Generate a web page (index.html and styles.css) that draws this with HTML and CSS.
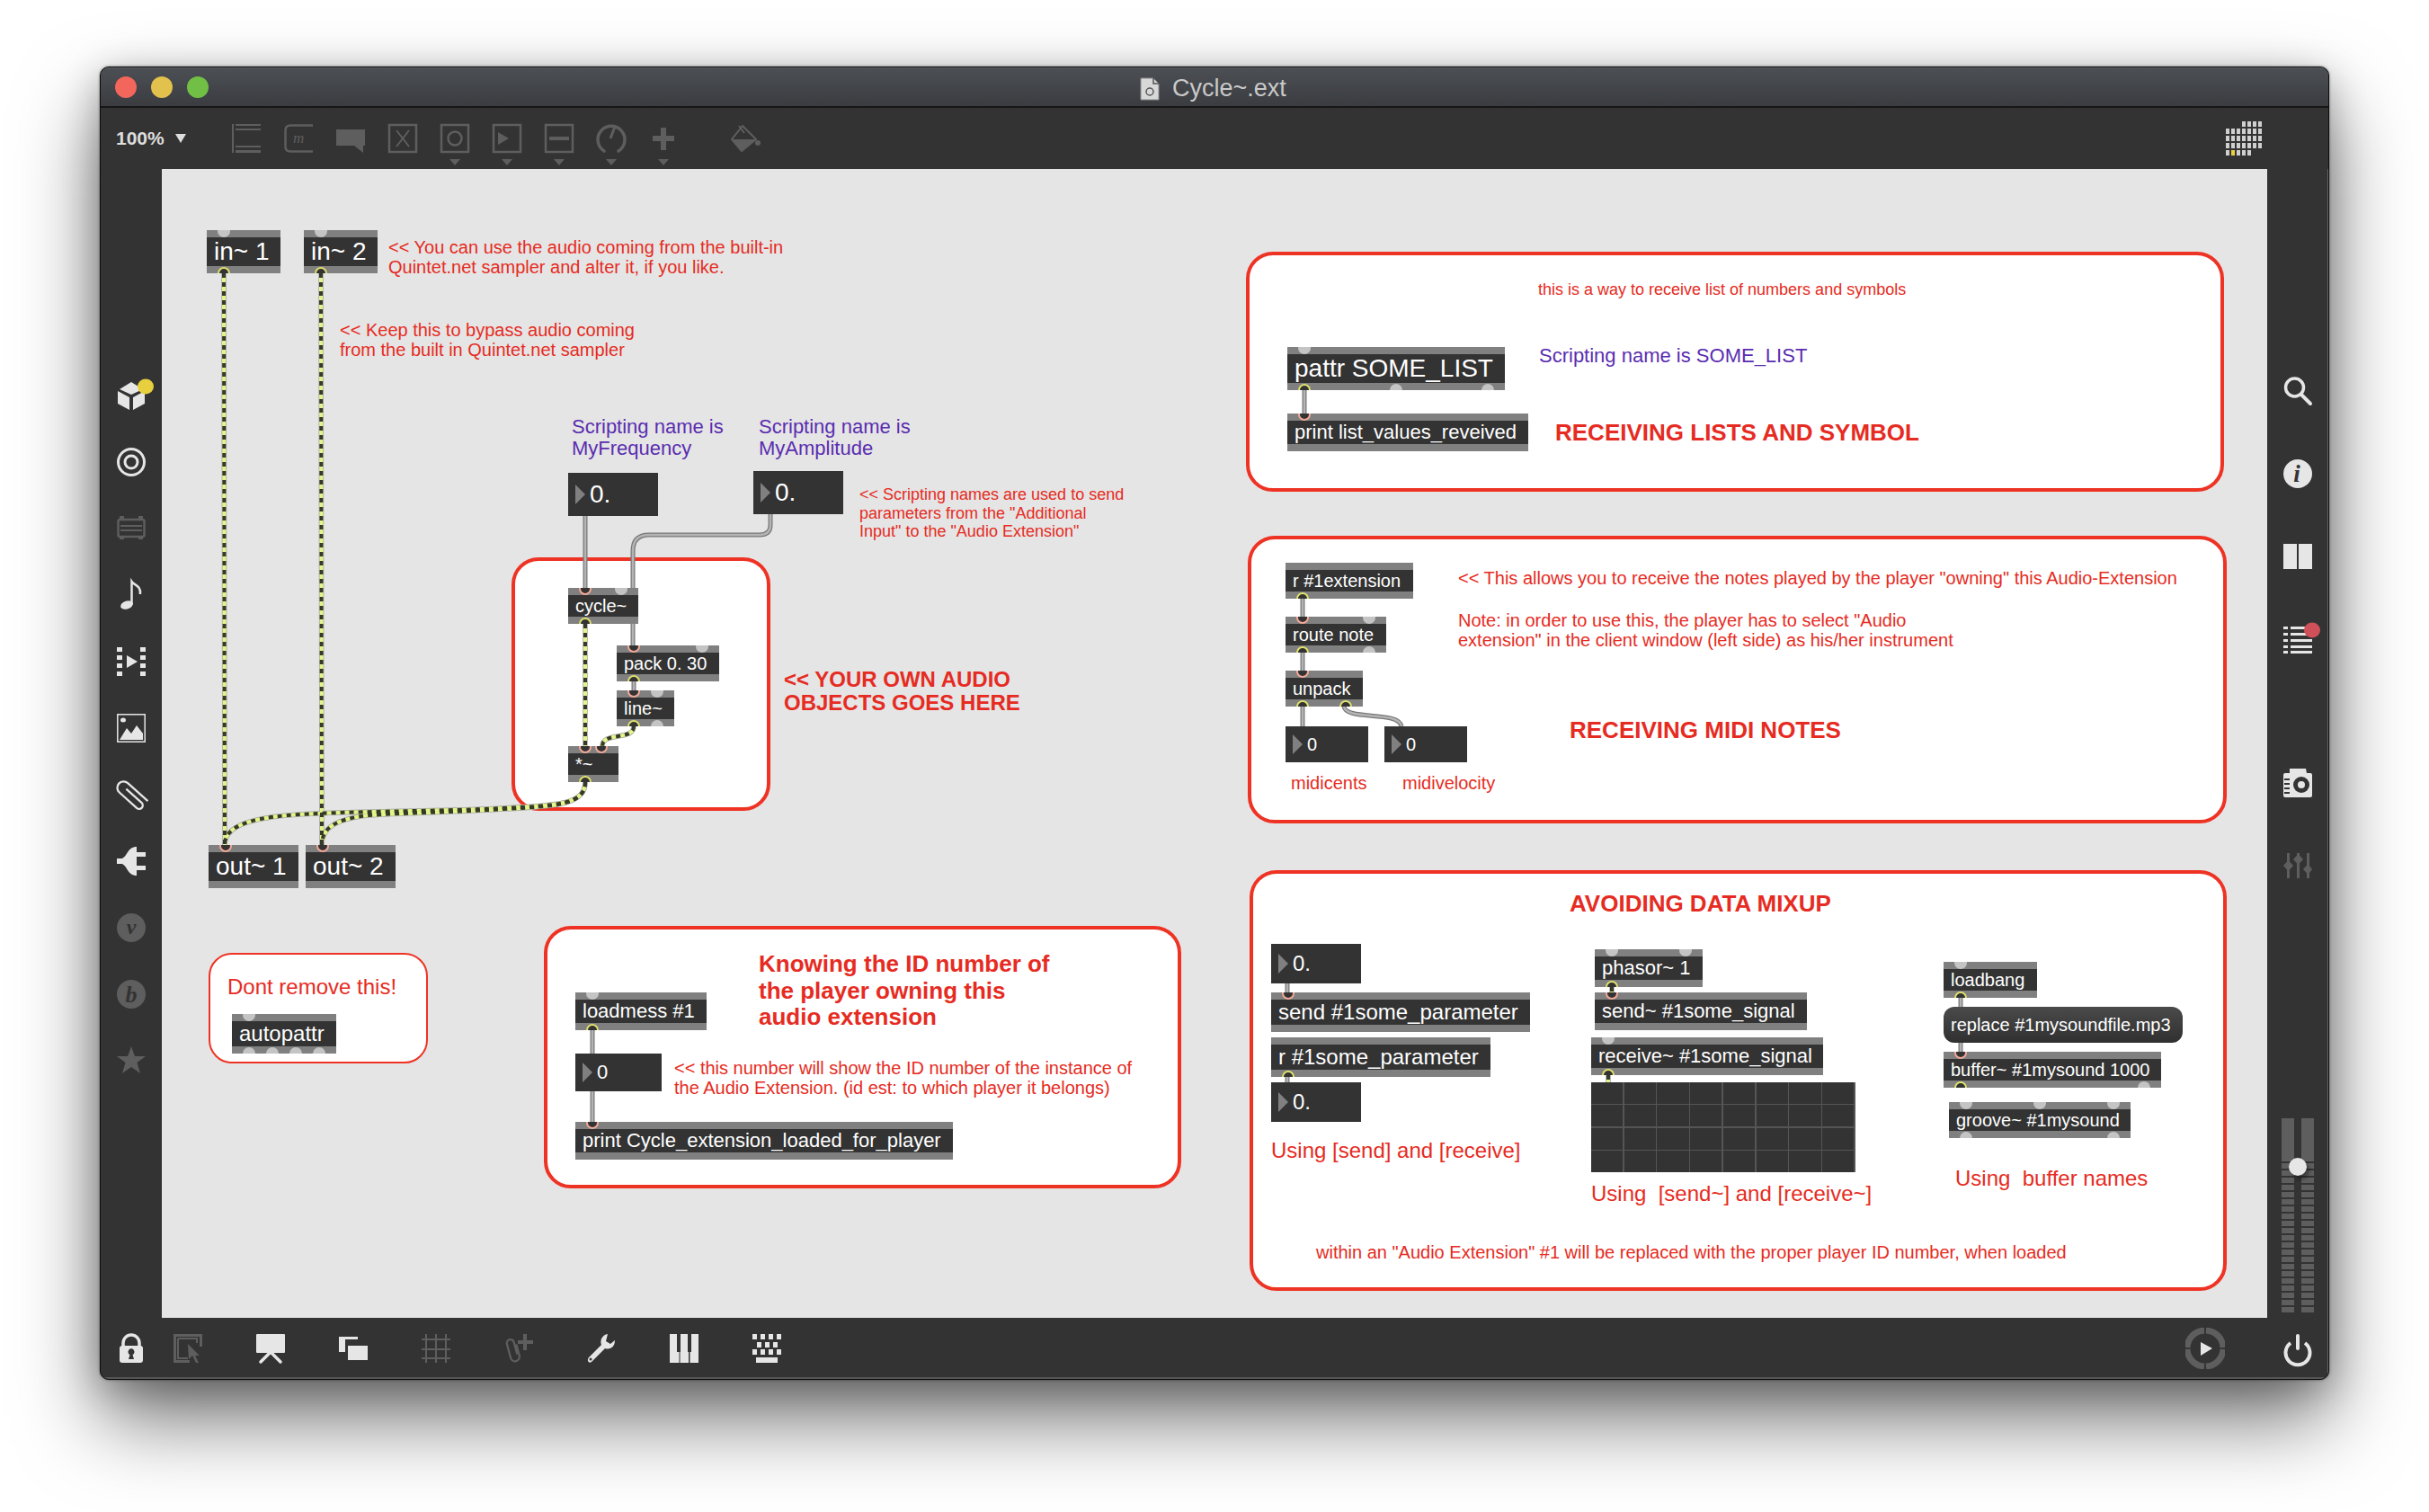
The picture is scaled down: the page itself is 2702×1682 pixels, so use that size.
FILE: index.html
```html
<!DOCTYPE html>
<html lang="en">
<head>
    <meta charset="UTF-8">
    <title>Cycle~.ext</title>
    <link rel="stylesheet" href="styles.css">
</head>
<body>

<div class="window">

    <div class="titlebar">
        <div class="lights"><i class="red"></i><i class="yellow"></i><i class="green"></i></div>
        <div class="title">
            <svg class="doc" viewBox="0 0 22 26"><path class="docpage" d="M1 1H15L21 7V25H1Z"/><path class="docfold" d="M15 1V7H21"/><circle class="docfold" cx="11" cy="16" r="4"/></svg>
            <span>Cycle~.ext</span>
        </div>
    </div>

    <div class="toolbar">
        <div class="zoom"><span>100%</span><i></i></div>
        <svg class="ic dim" viewBox="0 0 32 32"><path class="f" d="M0 0H2V32H0ZM4 0H32V2H4ZM4 5H32V7H4ZM4 24H32V26H4ZM4 29H32V32H4Z"/></svg>
        <svg class="ic dim" viewBox="0 0 32 32"><path class="s" stroke-width="2.5" d="M32 1.500H7Q1.500 1.500 1.500 7V25Q1.500 30.500 7 30.500H32"/><text class="glyph" x="10" y="21" font-size="17">m</text></svg>
        <svg class="ic dim" viewBox="0 0 32 32"><path class="f" d="M0 6H32V24H30V32L20 24H0Z"/></svg>
        <svg class="ic dim" viewBox="0 0 32 32"><rect class="s" stroke-width="2.500" x="1" y="1" width="30" height="30"/><path class="s" stroke-width="2" d="M9 7L23 25M23 7L9 25"/></svg>
        <div class="tool drop"><svg class="ic dim" viewBox="0 0 32 32"><rect class="s" stroke-width="2.500" x="1" y="1" width="30" height="30"/><circle class="s" stroke-width="2.500" cx="16" cy="16" r="7.500"/></svg></div>
        <div class="tool drop"><svg class="ic dim" viewBox="0 0 32 32"><rect class="s" stroke-width="2.500" x="1" y="1" width="30" height="30"/><path class="f" d="M6 9L18 16L6 23Z"/></svg></div>
        <div class="tool drop"><svg class="ic dim" viewBox="0 0 32 32"><rect class="s" stroke-width="2.500" x="1" y="1" width="30" height="30"/><path class="f" d="M5 14H27V18H5Z"/></svg></div>
        <div class="tool drop"><svg class="ic dim" viewBox="0 0 32 32"><path class="s" stroke-width="3.500" stroke-linecap="round" d="M8 30A15 15 0 1 1 24 30"/><path class="s" stroke-width="3" d="M15 16L20 3"/></svg></div>
        <div class="tool drop"><svg class="ic dim" viewBox="0 0 32 32"><path class="f" d="M13 4H19V13H28V19H19V29H13V19H4V13H13Z"/></svg></div>
        <svg class="ic dim paint" viewBox="0 0 32 32"><path class="s" stroke-width="2" d="M12 2L0 17L11 30L27 17Z M8 2L14 10"/><path class="f" d="M0 17H27L11 30Z"/><circle class="f" cx="29" cy="21" r="3"/></svg>
        <svg class="cpu" viewBox="0 0 40 38">
            <defs><pattern id="cell" width="6" height="8" patternUnits="userSpaceOnUse"><rect class="cellbit" width="4" height="6"/></pattern></defs>
            <rect fill="url(#cell)" x="18" width="22" height="8"/>
            <rect fill="url(#cell)" y="8" width="40" height="24"/>
            <rect fill="url(#cell)" y="32" width="28" height="6"/>
            <rect class="cellhot" x="6" y="32" width="4" height="6"/>
        </svg>
    </div>

    <div class="middle">
        <div class="sidebar left">
            <svg class="ic lit" viewBox="0 0 32 32"><path class="f" d="M16 1L29 9L16 15L3 9ZM1 11L14 18V32L1 25ZM18 18L31 11V25L18 32Z"/><ellipse class="dot-yellow" cx="32" cy="6" rx="9" ry="8.500"/></svg>
            <svg class="ic lit" viewBox="0 0 32 32"><circle class="s" stroke-width="3" cx="16" cy="16" r="14.500"/><circle class="s" stroke-width="3" cx="16" cy="16" r="7"/></svg>
            <svg class="ic dim" viewBox="0 0 32 32"><rect class="s" stroke-width="2.500" x="1.500" y="6" width="29" height="19" rx="2"/><path class="s" stroke-width="2" d="M4 13H28M4 18H28"/><path class="f" d="M3 2H8V6H3ZM24 2H29V6H24ZM3 25H8V28H3ZM24 25H29V28H24Z"/></svg>
            <svg class="ic lit" viewBox="0 0 32 32"><ellipse class="f" cx="11" cy="27" rx="7" ry="4.500" transform="rotate(-18 11 27)"/><path class="s" stroke-width="2.500" d="M16.500 27V1C19 5 27 5 26 15"/></svg>
            <svg class="ic lit" viewBox="0 0 32 32"><path class="f" d="M0 0H6V5H0ZM0 9H6V14H0ZM0 18H6V23H0ZM0 27H6V32H0ZM26 0H32V5H26ZM26 9H32V14H26ZM26 18H32V23H26ZM26 27H32V32H26ZM11 9L23 16L11 23Z"/></svg>
            <svg class="ic lit" viewBox="0 0 32 32"><rect class="s" stroke-width="1.500" x="0.800" y="0.800" width="30.400" height="30.400"/><path class="f" d="M3 29L11 16L16 22L22 13L29 22V29Z"/><ellipse class="f" cx="7" cy="7" rx="3" ry="2.500"/></svg>
            <svg class="ic lit" viewBox="0 0 32 32"><path class="s" stroke-width="2.300" transform="rotate(42 16 16) translate(3.500 0)" d="M31 9H1A7 7 0 0 0 1 23H27A4 4 0 0 0 27 15H4"/></svg>
            <svg class="ic lit" viewBox="0 0 32 32"><path class="f" d="M22 0V32C12 32 12 22 6 19H0V13H6C12 10 12 0 22 0ZM22 6H32V11H22ZM22 21H32V26H22Z"/></svg>
            <svg class="ic dim" viewBox="0 0 32 32"><circle class="f" cx="16" cy="16" r="16"/><text class="badge" x="16" y="23" font-size="24">v</text></svg>
            <svg class="ic dim" viewBox="0 0 32 32"><circle class="f" cx="16" cy="16" r="16"/><text class="badge" x="16" y="25" font-size="26">b</text></svg>
            <svg class="ic dim" viewBox="0 0 32 32"><path class="f" d="M16 0L20 11H32L22.500 18L26 30L16 23L6 30L9.500 18L0 11H12Z"/></svg>
        </div>

        <div class="canvas">
            <div class="box box-own"></div>
            <div class="box thin box-dont"></div>
            <div class="box box-id"></div>
            <div class="box box-list"></div>
            <div class="box box-midi"></div>
            <div class="box box-mix"></div>

            <svg class="cords" viewBox="180 188 2342 1278">
                <defs>
                    <g id="plain">
                        <path d="M651 574V654"/>
                        <path d="M857 572V584Q857 595 845 595H722Q704 595 704 613V718"/>
                        <path d="M705 758V768"/>
                        <path d="M1451 434V460"/>
                        <path d="M1449 666V686"/>
                        <path d="M1449 726V746"/>
                        <path d="M1449 786V808"/>
                        <path d="M1495 786C1497 802 1556 790 1559 808"/>
                        <path d="M659 1146V1248"/>
                        <path d="M1432 1094V1104"/>
                        <path d="M1432 1198V1204"/>
                        <path d="M2181 1110V1120"/>
                        <path d="M2181 1160V1170"/>
                    </g>
                    <g id="signal">
                        <path d="M249 304L250 940"/>
                        <path d="M357 304L358 940"/>
                        <path d="M651 694V830"/>
                        <path d="M705 808C705 824 670 814 670 830"/>
                        <path d="M651 870C651 895 620 896 560 899C480 903 380 902 320 907C275 911 250 920 250 940"/>
                        <path d="M651 870C651 895 620 897 560 900C500 904 450 904 410 907C375 911 358 920 358 940"/>
                        <path d="M1793 1098V1104"/>
                        <path d="M1789 1196V1204"/>
                    </g>
                </defs>
                <use href="#plain" class="plain-edge"/>
                <use href="#plain" class="plain-core"/>
                <use href="#signal" class="signal-edge"/>
                <use href="#signal" class="signal-core"/>
                <use href="#signal" class="signal-dash"/>
            </svg>

            <div class="obj s48 n-in1"><div class="ports"><i></i></div><span>in~ 1</span><div class="ports"><i class="on"></i></div></div>
            <div class="obj s48 n-in2"><div class="ports"><i></i></div><span>in~ 2</span><div class="ports"><i class="on"></i></div></div>
            <div class="obj s48 n-out1"><div class="ports"><i class="on"></i></div><span>out~ 1</span><div class="ports"></div></div>
            <div class="obj s48 n-out2"><div class="ports"><i class="on"></i></div><span>out~ 2</span><div class="ports"></div></div>
            <div class="num s48 n-freq">0.</div>
            <div class="num s48 n-amp">0.</div>
            <div class="obj s40 n-cycle"><div class="ports"><i class="on"></i><i></i></div><span>cycle~</span><div class="ports"><i class="on"></i></div></div>
            <div class="obj s40 n-pack"><div class="ports"><i class="on"></i><i></i></div><span>pack 0. 30</span><div class="ports"><i class="on"></i></div></div>
            <div class="obj s40 n-line"><div class="ports"><i class="on"></i><i></i></div><span>line~</span><div class="ports"><i class="on"></i><i></i></div></div>
            <div class="obj s40 n-times"><div class="ports"><i class="on"></i><i class="on"></i></div><span>*~</span><div class="ports"><i class="on"></i></div></div>

            <div class="obj s44 n-autopattr"><div class="ports"><i></i></div><span>autopattr</span><div class="ports"><i></i><i></i><i></i><i></i></div></div>
            <div class="obj s42 n-loadmess"><div class="ports"><i></i></div><span>loadmess #1</span><div class="ports"><i class="on"></i></div></div>
            <div class="num s42 n-id">0</div>
            <div class="obj s42 n-print"><div class="ports"><i class="on"></i></div><span>print Cycle_extension_loaded_for_player</span><div class="ports"></div></div>

            <div class="obj s48 n-pattr"><div class="ports"><i></i></div><span>pattr SOME_LIST</span><div class="ports"><i class="on"></i><i></i><i></i></div></div>
            <div class="obj s42 n-printlist"><div class="ports"><i class="on"></i></div><span>print list_values_reveived</span><div class="ports"></div></div>

            <div class="obj s40 n-rext"><div class="ports"></div><span>r #1extension</span><div class="ports"><i class="on"></i></div></div>
            <div class="obj s40 n-route"><div class="ports"><i class="on"></i><i></i></div><span>route note</span><div class="ports"><i class="on"></i><i></i></div></div>
            <div class="obj s40 n-unpack"><div class="ports"><i class="on"></i></div><span>unpack</span><div class="ports"><i class="on"></i><i class="on"></i></div></div>
            <div class="num s40 n-cents">0</div>
            <div class="num s40 n-vel">0</div>

            <div class="num s44 n-s1">0.</div>
            <div class="obj s44 n-send"><div class="ports"><i class="on"></i></div><span>send #1some_parameter</span><div class="ports"></div></div>
            <div class="obj s44 n-rparam"><div class="ports"></div><span>r #1some_parameter</span><div class="ports"><i class="on"></i></div></div>
            <div class="num s44 n-s2">0.</div>
            <div class="obj s42 n-phasor"><div class="ports"><i></i><i></i></div><span>phasor~ 1</span><div class="ports"><i class="on"></i></div></div>
            <div class="obj s42 n-sendsig"><div class="ports"><i class="on"></i></div><span>send~ #1some_signal</span><div class="ports"></div></div>
            <div class="obj s42 n-recvsig"><div class="ports"><i></i></div><span>receive~ #1some_signal</span><div class="ports"><i class="on"></i></div></div>
            <div class="scope"></div>
            <div class="obj s40 n-loadbang"><div class="ports"><i></i></div><span>loadbang</span><div class="ports"><i class="on"></i></div></div>
            <div class="msg n-replace">replace #1mysoundfile.mp3</div>
            <div class="obj s40 n-buffer"><div class="ports"><i class="on"></i></div><span>buffer~ #1mysound 1000</span><div class="ports"><i class="on"></i><i></i></div></div>
            <div class="obj s40 n-groove"><div class="ports"><i></i><i></i><i></i></div><span>groove~ #1mysound</span><div class="ports"><i></i><i></i></div></div>

            <div class="note c-builtin">&lt;&lt; You can use the audio coming from the built-in<br>Quintet.net sampler and alter it, if you like.</div>
            <div class="note c-bypass">&lt;&lt; Keep this to bypass audio coming<br>from the built in Quintet.net sampler</div>
            <div class="purple p-freq">Scripting name is<br>MyFrequency</div>
            <div class="purple p-amp">Scripting name is<br>MyAmplitude</div>
            <div class="note small c-scripting">&lt;&lt; Scripting names are used to send<br>parameters from the "Additional<br>Input" to the "Audio Extension"</div>
            <div class="head h-own">&lt;&lt; YOUR OWN AUDIO<br>OBJECTS GOES HERE</div>
            <div class="note big c-dont">Dont remove this!</div>
            <div class="head h-know">Knowing the ID number of<br>the player owning this<br>audio extension</div>
            <div class="note c-id">&lt;&lt; this number will show the ID number of the instance of<br>the Audio Extension. (id est: to which player it belongs)</div>
            <div class="note small c-way">this is a way to receive list of numbers and symbols</div>
            <div class="purple p-list">Scripting name is SOME_LIST</div>
            <div class="head h-lists">RECEIVING LISTS AND SYMBOL</div>
            <div class="note c-allows">&lt;&lt; This allows you to receive the notes played by the player "owning" this Audio-Extension</div>
            <div class="note c-select">Note: in order to use this, the player has to select "Audio<br>extension" in the client window (left side) as his/her instrument</div>
            <div class="head h-midi">RECEIVING MIDI NOTES</div>
            <div class="note c-cents">midicents</div>
            <div class="note c-vel">midivelocity</div>
            <div class="head h-mix">AVOIDING DATA MIXUP</div>
            <div class="note big c-using1">Using [send] and [receive]</div>
            <div class="note big c-using2">Using&nbsp; [send~] and [receive~]</div>
            <div class="note big c-using3">Using&nbsp; buffer names</div>
            <div class="note c-within">within an "Audio Extension" #1 will be replaced with the proper player ID number, when loaded</div>
        </div>

        <div class="sidebar right">
            <svg class="ic lit" viewBox="0 0 32 32"><circle class="s" stroke-width="3.500" cx="12.500" cy="12" r="10"/><path class="s" stroke-width="4" stroke-linecap="round" d="M20 20L30 30"/></svg>
            <svg class="ic lit" viewBox="0 0 32 32"><circle class="f" cx="16" cy="16" r="16"/><text class="badge" x="15" y="25" font-size="27">i</text></svg>
            <svg class="ic lit" viewBox="0 0 32 32"><path class="f" d="M0 2H15V30H0ZM17 2H32V30H17Z"/></svg>
            <svg class="ic lit" viewBox="0 0 32 32"><path class="f" d="M0 2H5V5H0ZM0 9H5V12H0ZM0 16H5V19H0ZM0 23H5V26H0ZM0 29H5V32H0ZM8 2H28V5H8ZM8 9H32V12H8ZM8 16H32V19H8ZM8 23H32V26H8ZM8 29H32V32H8Z"/><ellipse class="dot-red" cx="32" cy="6" rx="9" ry="8.500"/></svg>
            <svg class="ic lit camera" viewBox="0 0 32 32"><path class="f" d="M7 0H25L26 5H30Q32 5 32 7V30Q32 32 30 32H2Q0 32 0 30V7Q0 5 2 5H7Z"/><circle class="cutout" cx="20" cy="18" r="9"/><circle class="f" cx="20" cy="18" r="4"/><path class="cutout" d="M1 11H7V13H1ZM1 16H7V18H1ZM1 21H7V23H1ZM1 26H7V28H1Z"/></svg>
            <svg class="ic dim" viewBox="0 0 32 32"><path class="f" d="M4 2H7V30H4ZM15 2H18V30H15ZM26 2H29V30H26ZM0 16L5.500 10L11 16L5.500 22ZM11 9L16.500 3L22 9L16.500 15ZM22 20L27.500 14L32 20L27.500 26Z"/></svg>
            <div class="meter">
                <div class="meter-col"></div>
                <div class="meter-col"></div>
                <i class="meter-knob"></i>
            </div>
        </div>
    </div>

    <div class="bottombar">
        <svg class="ic lit" viewBox="0 0 32 32"><path class="s" stroke-width="3.500" d="M7 15V10A9 9 0 0 1 25 10V15"/><rect class="f" x="3" y="13" width="26" height="19" rx="3"/><path class="cutout" d="M14.500 23L13 28H19L17.500 23A3.500 3.500 0 1 0 14.500 23Z"/></svg>
        <svg class="ic dim" viewBox="0 0 32 32"><path class="f" d="M0 0H32V14H29V3H3V29H18V32H0Z"/><path class="s" stroke-width="2" d="M5 5H26V10M5 5V27H16"/><path class="f" d="M16 11L29 24L24 24L28 32L25 32L21 24L17 28Z"/></svg>
        <svg class="ic lit" viewBox="0 0 32 32"><rect class="f" width="32" height="21" rx="1"/><path class="s" stroke-width="3.500" stroke-linecap="round" d="M16 20L5 31M16 20L27 31" /></svg>
        <svg class="ic lit" viewBox="0 0 32 32"><path class="f" d="M0 3H21V6H7V20H0ZM10 13H32V29H10Z"/></svg>
        <svg class="ic dim" viewBox="0 0 32 32"><path class="s" stroke-width="2" d="M5 0V32M16 0V32M27 0V32M0 6H32M0 17H32M0 27H32"/></svg>
        <svg class="ic dim" viewBox="0 0 32 32"><path class="s" stroke-width="2.300" transform="rotate(-15 12 18)" d="M15 12V25A5 5 0 0 1 5 25V9A4 4 0 0 1 13 9V23"/><path class="f" d="M21 0H25V7H32V11H25V18H21V11H15V7H21Z"/></svg>
        <svg class="ic lit" viewBox="0 0 32 32"><path class="f" d="M23 0C17 1 14 7 16 12L2 26C-1 30 3 34 6 30L20 16C26 18 31 14 31 7L26 11L21 8Z"/><circle class="cutout" cx="4" cy="28" r="1.500"/></svg>
        <svg class="ic lit" viewBox="0 0 32 32"><path class="f" d="M0 0H8V20H10.500V32H0ZM12 0H20V20H21V32H11.500V20H12ZM24 0H32V32H22.500V20H24Z"/></svg>
        <svg class="ic lit" viewBox="0 0 32 32"><path class="f" d="M0 0H5V6H0ZM9 0H14V6H9ZM18 0H23V6H18ZM27 0H32V6H27ZM5 9H10V15H5ZM14 9H19V15H14ZM23 9H28V15H23ZM0 17H5V23H0ZM9 17H14V23H9ZM18 17H23V23H18ZM27 17H32V23H27ZM4 26H28V32H4Z"/></svg>
        <svg class="ring" viewBox="0 0 44 46"><path class="ring-arc" d="M21 3A20 20 0 0 0 2 22M23 3A20 20 0 0 1 42 22M2 24A20 20 0 0 0 21 43M42 24A20 20 0 0 1 23 43"/><path class="ring-play" d="M17 16L30 23L17 31Z"/></svg>
        <svg class="ic lit power" viewBox="0 0 32 32"><path class="s" stroke-width="4" d="M8 10A13.500 13.500 0 1 0 24 10"/><path class="s" stroke-width="4" stroke-linecap="round" d="M16 2V16"/></svg>
    </div>

</div>

</body>
</html>
```

FILE: styles.css
```css
body {
    margin: 0;
    height: 1682px;
    overflow: hidden;
    padding: 74px 0 0 111px;
    box-sizing: border-box;
    background-color: #fff;
    font-family: "Liberation Sans", Arial, sans-serif;
}

/* window frame */
.window {
    width: 2480px;
    height: 1461px;
    box-sizing: border-box;
    border: 1px solid #0c0c0c;
    border-radius: 10px;
    overflow: hidden;
    background-color: #333;
    display: flex;
    flex-direction: column;
    box-shadow: 0 0 3px rgba(0, 0, 0, 0.5), 0 44px 90px rgba(0, 0, 0, 0.55), 0 10px 40px rgba(0, 0, 0, 0.25);
}
.titlebar {
    height: 45px;
    box-sizing: border-box;
    border-bottom: 2px solid #161616;
    background: linear-gradient(#4c4f54, #3a3c40);
    box-shadow: inset 0 1px 0 #5c5f64;
    display: flex;
    align-items: center;
    position: relative;
}
.lights {
    display: flex;
    gap: 16px;
    padding-left: 16px;
}
.lights i {
    width: 24px;
    height: 24px;
    border-radius: 50%;
}
.lights .red { background-color: #f2665b; }
.lights .yellow { background-color: #e2c14c; }
.lights .green { background-color: #71c045; }
.title {
    position: absolute;
    left: 1156px;
    top: 8px;
    display: flex;
    align-items: center;
    gap: 14px;
    font-size: 27px;
    color: #c9c9c9;
}
.doc { width: 22px; height: 26px; }
.docpage { fill: #d8d8d8; stroke: #8a8a8a; stroke-width: 1; }
.docfold { fill: none; stroke: #555; stroke-width: 1.5; }

/* toolbar */
.toolbar {
    height: 68px;
    flex: none;
    display: flex;
    align-items: center;
    gap: 26px;
    padding-right: 74px;
}
.zoom {
    width: 120px;
    padding-left: 17px;
    box-sizing: border-box;
    flex: none;
    display: flex;
    align-items: center;
    gap: 12px;
    font-size: 21px;
    font-weight: bold;
    color: #ddd;
    white-space: nowrap;
}
.zoom i {
    width: 0;
    height: 0;
    border-left: 6px solid transparent;
    border-right: 6px solid transparent;
    border-top: 10px solid #ddd;
}
.ic {
    width: 32px;
    height: 32px;
    flex: none;
    overflow: visible;
    display: block;
}
.dim { color: #5e5e5e; }
.lit { color: #e6e6e6; }
.f { fill: currentColor; }
.s { fill: none; stroke: currentColor; }
.glyph { fill: currentColor; font-family: "Liberation Serif", serif; font-style: italic; }
.badge { fill: #333; font-family: "Liberation Serif", serif; font-style: italic; font-weight: bold; text-anchor: middle; }
.cutout { fill: #333; }
.tool { position: relative; }
.drop::after {
    content: "";
    position: absolute;
    left: 10px;
    top: 39px;
    border-left: 6px solid transparent;
    border-right: 6px solid transparent;
    border-top: 7px solid #5e5e5e;
}
.paint { margin-left: 34px; }
.cpu { width: 40px; height: 38px; margin-left: auto; flex: none; }
.cellbit { fill: #cfcfcf; }
.cellhot { fill: #e8cf3e; }
.dot-yellow { fill: #e8cf3e; }
.dot-red { fill: #d0505a; }

/* side columns */
.middle {
    height: 1278px;
    flex: none;
    display: flex;
}
.sidebar {
    width: 68px;
    flex: none;
    box-sizing: border-box;
    display: flex;
    flex-direction: column;
    align-items: center;
}
.sidebar.left {
    padding-top: 236px;
    gap: 42px;
}
.sidebar.right {
    padding-top: 231px;
    padding-bottom: 6px;
    gap: 60px;
    box-shadow: inset -1px 0 0 #666;
}
.camera { margin-top: 68px; }
.meter {
    margin-top: auto;
    position: relative;
    display: flex;
    gap: 8px;
}
.meter-col {
    width: 14px;
    height: 216px;
    background:
        linear-gradient(#5e5e5e, #5e5e5e) top / 14px 48px no-repeat,
        repeating-linear-gradient(#333 0, #333 2px, #5e5e5e 2px, #5e5e5e 8px) 0 48px / 14px 168px no-repeat;
}
.meter-knob {
    position: absolute;
    left: 8px;
    top: 44px;
    width: 20px;
    height: 20px;
    border-radius: 50%;
    background-color: #e6e6e6;
    box-shadow: 3px 4px 4px rgba(0, 0, 0, 0.35);
}

/* bottom bar */
.bottombar {
    height: 68px;
    flex: none;
    display: flex;
    align-items: center;
    gap: 60px;
    padding-left: 18px;
    padding-right: 18px;
    box-shadow: inset 0 -2px 0 #555, inset -1px 0 0 #666;
}
.bottombar .ic:first-child { margin-right: -29px; }
.ring { width: 44px; height: 46px; margin-left: auto; flex: none; }
.ring-arc { fill: none; stroke: #5e5e5e; stroke-width: 7; }
.ring-play { fill: #e6e6e6; }
.bottombar .power { margin-left: 5px; }

/* patcher */
.canvas {
    width: 2342px;
    flex: none;
    position: relative;
    background-color: #e5e5e5;
    overflow: hidden;
}
.cords {
    position: absolute;
    left: 0;
    top: 0;
    width: 2342px;
    height: 1278px;
    fill: none;
}
.plain-edge { stroke: #787878; stroke-width: 5; }
.plain-core { stroke: #b4b4b4; stroke-width: 2.5; }
.signal-edge { stroke: #a5a5a5; stroke-width: 5.5; }
.signal-core { stroke: #e3f58a; stroke-width: 4; }
.signal-dash { stroke: #363a28; stroke-width: 4; stroke-dasharray: 5 5; }

.box {
    position: absolute;
    box-sizing: border-box;
    background-color: #fff;
    border: 4px solid #ee3324;
    border-radius: 30px;
}
.box.thin { border-width: 2px; border-radius: 26px; }
.box-own { left: 389px; top: 432px; width: 288px; height: 282px; }
.box-dont { left: 52px; top: 872px; width: 244px; height: 123px; }
.box-id { left: 425px; top: 842px; width: 709px; height: 292px; }
.box-list { left: 1206px; top: 92px; width: 1088px; height: 267px; }
.box-midi { left: 1208px; top: 408px; width: 1089px; height: 320px; }
.box-mix { left: 1210px; top: 780px; width: 1087px; height: 468px; }

.obj {
    position: absolute;
    box-sizing: border-box;
    display: flex;
    flex-direction: column;
    background-color: #333;
    color: #fff;
    white-space: nowrap;
}
.obj span {
    flex: 1;
    display: flex;
    align-items: center;
    padding-left: 8px;
}
.ports {
    height: 8px;
    flex: none;
    background-color: #808080;
    display: flex;
    justify-content: space-between;
    padding: 0 12px;
    overflow: hidden;
}
.ports i {
    width: 14px;
    height: 14px;
    flex: none;
    box-sizing: border-box;
    border-radius: 50%;
    background-color: #c4c4c4;
}
.ports:first-child i { margin-top: -6px; }
.ports:last-child i { margin-top: 1px; }
.ports:first-child i.on { background-color: #333; border: 2px solid #f2a898; }
.ports:last-child i.on { background-color: #333; border: 2px solid #dfe06c; }

.s40 { height: 40px; font-size: 20px; }
.s42 { height: 42px; font-size: 22px; }
.s44 { height: 44px; font-size: 24px; }
.s48 { height: 48px; font-size: 28px; }

.num {
    position: absolute;
    box-sizing: border-box;
    background-color: #333;
    color: #fff;
    display: flex;
    align-items: center;
    padding-left: 24px;
}
.num::before {
    content: "";
    position: absolute;
    left: 8px;
    top: 50%;
    margin-top: -11px;
    border-top: 11px solid transparent;
    border-bottom: 11px solid transparent;
    border-left: 11px solid #808080;
}
.msg {
    position: absolute;
    box-sizing: border-box;
    height: 40px;
    border-radius: 12px;
    background: linear-gradient(#4a4a4a, #303030);
    color: #fff;
    font-size: 20px;
    display: flex;
    align-items: center;
    padding-left: 8px;
    white-space: nowrap;
}
.scope {
    position: absolute;
    left: 1590px;
    top: 1016px;
    width: 294px;
    height: 100px;
    background:
        repeating-linear-gradient(90deg, #333 0, #333 35px, #555 35px, #555 36.750px),
        #333;
}
.scope::after {
    content: "";
    position: absolute;
    inset: 0;
    background: repeating-linear-gradient(transparent 0, transparent 24px, #555 24px, #555 25.500px);
}

.n-in1 { left: 50px; top: 68px; width: 82px; }
.n-in2 { left: 158px; top: 68px; width: 82px; }
.n-out1 { left: 52px; top: 752px; width: 100px; }
.n-out2 { left: 160px; top: 752px; width: 100px; }
.n-freq { left: 452px; top: 338px; width: 100px; }
.n-amp { left: 658px; top: 336px; width: 100px; }
.n-cycle { left: 452px; top: 466px; width: 78px; }
.n-pack { left: 506px; top: 530px; width: 114px; }
.n-line { left: 506px; top: 580px; width: 64px; }
.n-times { left: 452px; top: 642px; width: 56px; }
.n-autopattr { left: 78px; top: 940px; width: 116px; }
.n-loadmess { left: 460px; top: 916px; width: 146px; }
.n-id { left: 460px; top: 984px; width: 96px; }
.n-print { left: 460px; top: 1060px; width: 420px; }
.n-pattr { left: 1252px; top: 198px; width: 242px; }
.n-printlist { left: 1252px; top: 272px; width: 268px; }
.n-rext { left: 1250px; top: 438px; width: 142px; }
.n-route { left: 1250px; top: 498px; width: 112px; }
.n-unpack { left: 1250px; top: 558px; width: 86px; }
.n-cents { left: 1250px; top: 620px; width: 92px; }
.n-vel { left: 1360px; top: 620px; width: 92px; }
.n-s1 { left: 1234px; top: 862px; width: 100px; }
.n-send { left: 1234px; top: 916px; width: 288px; }
.n-rparam { left: 1234px; top: 966px; width: 244px; }
.n-s2 { left: 1234px; top: 1016px; width: 100px; }
.n-phasor { left: 1594px; top: 868px; width: 120px; }
.n-sendsig { left: 1594px; top: 916px; width: 236px; }
.n-recvsig { left: 1590px; top: 966px; width: 258px; }
.n-loadbang { left: 1982px; top: 882px; width: 104px; }
.n-replace { left: 1982px; top: 932px; width: 266px; }
.n-buffer { left: 1982px; top: 982px; width: 242px; }
.n-groove { left: 1988px; top: 1038px; width: 202px; }

/* comments */
.note, .purple, .head {
    position: absolute;
    white-space: nowrap;
}
.note {
    color: #e62b22;
    font-size: 20px;
    line-height: 22px;
}
.note.small { font-size: 18px; line-height: 20.500px; }
.note.big { font-size: 24px; line-height: 28px; }
.purple {
    color: #5a2db0;
    font-size: 22px;
    line-height: 24px;
}
.head {
    color: #e62b22;
    font-weight: bold;
    font-size: 26px;
    line-height: 30px;
}
.c-builtin { left: 252px; top: 76px; }
.c-bypass { left: 198px; top: 168px; }
.p-freq { left: 456px; top: 275px; }
.p-amp { left: 664px; top: 275px; }
.c-scripting { left: 776px; top: 352px; }
.h-own { left: 692px; top: 555px; font-size: 24px; line-height: 26px; }
.c-dont { left: 73px; top: 896px; }
.h-know { left: 664px; top: 870px; line-height: 29.500px; }
.c-id { left: 570px; top: 989px; }
.c-way { left: 1531px; top: 124px; }
.p-list { left: 1532px; top: 196px; }
.h-lists { left: 1550px; top: 278px; }
.c-allows { left: 1442px; top: 444px; }
.c-select { left: 1442px; top: 491px; }
.h-midi { left: 1566px; top: 609px; }
.c-cents { left: 1256px; top: 672px; }
.c-vel { left: 1380px; top: 672px; }
.h-mix { left: 1566px; top: 802px; }
.c-using1 { left: 1234px; top: 1078px; }
.c-using2 { left: 1590px; top: 1126px; }
.c-using3 { left: 1995px; top: 1109px; }
.c-within { left: 1284px; top: 1194px; }
```
